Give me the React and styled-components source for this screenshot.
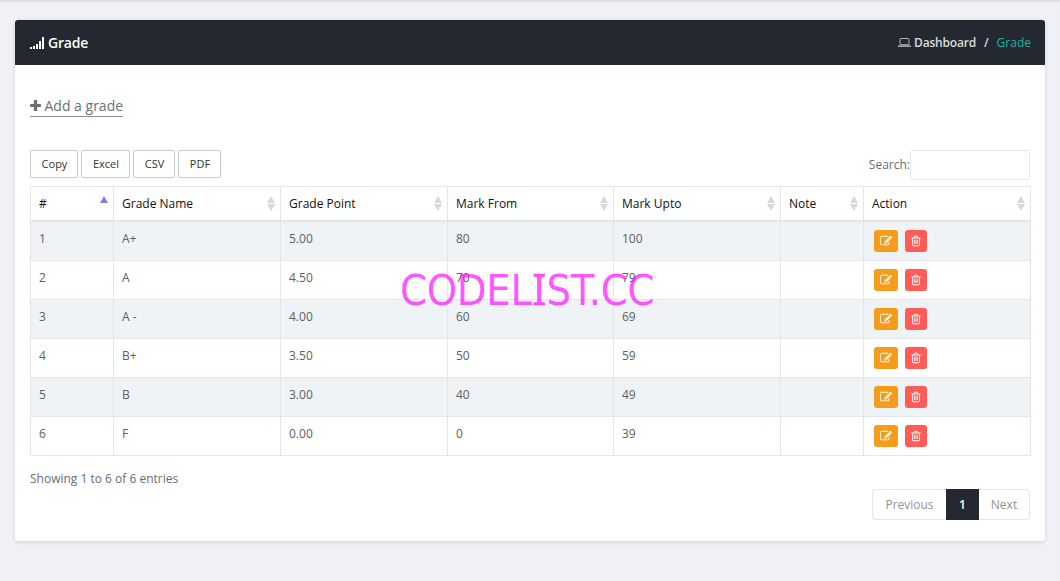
import React from "react";
import styled, { createGlobalStyle, css } from "styled-components";

const Global = createGlobalStyle`
  * { box-sizing: border-box; }
  body {
    margin: 0;
    background: #f0f1f6;
    color: #6a6e72;
    font: 13px/20px "Open Sans", sans-serif;
  }
  button, input { font-family: inherit; }
`;

const Page = styled.main`
  position: relative;
  height: 581px;
  padding: 20px 15px 0;
  overflow: hidden;
  box-shadow: inset 0 3px 3px -2px rgba(0, 0, 0, 0.13);
`;

const Card = styled.section`
  height: 521px;
  background: #fff;
  border-radius: 3px;
  box-shadow: 0 1px 4px rgba(0, 0, 0, 0.13);
`;

const CardHeader = styled.header`
  display: flex;
  align-items: center;
  justify-content: space-between;
  height: 45px;
  padding: 0 14px 0 15px;
  border-radius: 3px 3px 0 0;
  background: #242830;
`;

const Title = styled.h1`
  display: flex;
  align-items: center;
  gap: 4px;
  margin: 0;
  color: #fff;
  font-size: 14px;
  font-weight: 600;
  letter-spacing: -0.2px;
`;

const Breadcrumb = styled.nav`
  display: flex;
  align-items: center;
  color: #dcdcdc;
  font-size: 12px;
  font-weight: 600;
`;

const Separator = styled.span`
  margin: 0 8px;
`;

const Crumb = styled.span`
  display: flex;
  align-items: center;
  gap: 3px;
  letter-spacing: -0.2px;
  ${(p) => p.$current && css`color: #17b3a8; font-weight: 400; letter-spacing: 0;`}
`;

const CardBody = styled.div`
  padding: 31px 14px 0 15px;
`;

const AddLink = styled.a`
  display: inline-flex;
  align-items: center;
  gap: 3.5px;
  height: 21px;
  padding-bottom: 1px;
  border-bottom: 1px solid #8c8f92;
  color: #6c7074;
  font-size: 14px;
  line-height: 19px;
  vertical-align: top;
`;

const Toolbar = styled.div`
  display: flex;
  justify-content: space-between;
  height: 30px;
  margin: 33px 1px 6px 0;
`;

const ExportGroup = styled.div`
  display: flex;
  gap: 3px;
`;

const ExportButton = styled.button`
  width: ${(p) => p.$width}px;
  height: 28px;
  padding: 0 0 2px 1px;
  border: 1px solid #c9c9c9;
  border-radius: 2px;
  background: #fff;
  color: #333;
  font-size: 11px;
`;

const SearchLabel = styled.label`
  display: flex;
  align-items: center;
  font-size: 12px;
  line-height: 28px;
`;

const SearchInput = styled.input`
  width: 120px;
  height: 30px;
  border: 1px solid #e4e7ea;
  border-radius: 3px;
  background: #fff;
`;

const Table = styled.table`
  width: 1001px;
  table-layout: fixed;
  border-collapse: separate;
  border-spacing: 0;
  border: solid #e2e7eb;
  border-width: 1px 1px 0 0;
`;

const HeadCell = styled.th`
  height: 35px;
  padding: 0 5.5px 0 8px;
  border: solid #e2e7eb;
  border-width: 0 0 2px 1px;
  color: #111;
  font-size: 12px;
  font-weight: 400;
  text-align: left;
`;

const HeadContent = styled.div`
  display: flex;
  align-items: center;
  justify-content: space-between;
`;

const Row = styled.tr`
  background: #fff;
  &:nth-child(odd) { background: #eff3f6; }
`;

const Cell = styled.td`
  height: 39px;
  padding: 0 8px 4px;
  border: solid #e2e7eb;
  border-width: 0 0 1px 1px;
  font-size: 12px;
  color: #606060;
`;

const ActionCell = styled(Cell)`
  padding: 0 10px;
`;

const Actions = styled.div`
  display: flex;
  gap: 7px;
`;

const ActionButton = styled.button`
  display: flex;
  align-items: center;
  justify-content: center;
  width: ${(p) => (p.$danger ? 22 : 24)}px;
  height: 22px;
  padding: 0;
  border: 0;
  border-radius: 3px;
  background: ${(p) => (p.$danger ? "#ff5b57" : "#f59c1a")};
  color: #fff;
`;

const Info = styled.div`
  margin-top: 13px;
  font-size: 12px;
`;

const Pagination = styled.nav`
  display: flex;
  justify-content: flex-end;
  height: 31px;
  margin-right: 1px;
`;

const PageButton = styled.button`
  width: ${(p) => p.$width}px;
  padding: 0;
  border: 1px solid #e2e7eb;
  border-width: ${(p) => p.$border};
  border-radius: ${(p) => p.$radius};
  background: #fff;
  color: #939393;
  font-size: 12px;
  ${(p) => p.$active && css`background: #242830; color: #fff; font-weight: 600;`}
`;

const Watermark = styled.div`
  position: absolute;
  left: 400px;
  top: 260px;
  color: rgba(255, 0, 255, 0.68);
  font: 43px/60px "DejaVu Sans Condensed", "DejaVu Sans", sans-serif;
  font-stretch: condensed;
  letter-spacing: -0.3px;
  white-space: nowrap;
  pointer-events: none;
`;

const SerifedLetter = styled.span`
  font-family: "Noto Sans", sans-serif;
  font-size: 44px;
  line-height: 1;
  -webkit-text-stroke: 0.3px rgba(255, 0, 255, 0.68);
`;

const SignalIcon = () => (
  <svg width="14" height="12" fill="currentColor" shapeRendering="crispEdges">
    <path d="M0 10h2v2H0zM3 9h2v3H3zM6 7h2v5H6zM9 4h2v8H9zM12 0h2v12h-2z" />
  </svg>
);

const LaptopIcon = () => (
  <svg width="13" height="9" fill="none" stroke="currentColor">
    <rect x="2" y=".5" width="9" height="6.2" rx="1" opacity=".75" />
    <path d="M0 8.1h13" strokeWidth="1.4" opacity=".85" />
  </svg>
);

const PlusIcon = () => (
  <svg width="11" height="11" fill="currentColor">
    <path d="M4.6 0h1.8q.8 0 .8.8V4h3q.8 0 .8.8v1.4q0 .8-.8.8h-3v3.200q0 .8-.8.8H4.600q-.8 0-.8-.8V7h-3Q0 7 0 6.200V4.800Q0 4 .8 4h3V.8q0-.8.8-.8z" />
  </svg>
);

const EditIcon = () => (
  <svg width="12" height="12" viewBox="0 0 1792 1792" fill="currentColor">
    <path d="M888 1184l116-116-152-152-116 116v56h96v96h56zm440-720q-16-16-33 1l-350 350q-17 17-1 33t33-1l350-350q17-17 1-33zm80 594v190q0 119-84.500 203.500t-203.500 84.500h-832q-119 0-203.500-84.500t-84.500-203.500v-832q0-119 84.500-203.500t203.500-84.500h832q63 0 117 25 15 7 18 23 3 17-9 29l-49 49q-14 14-32 8-23-6-45-6h-832q-66 0-113 47t-47 113v832q0 66 47 113t113 47h832q66 0 113-47t47-113v-126q0-13 9-22l64-64q15-15 35-7t20 29zm-96-738l288 288-672 672h-288v-288zm444 132l-92 92-288-288 92-92q28-28 68-28t68 28l152 152q28 28 28 68t-28 68z" />
  </svg>
);

const TrashIcon = () => (
  <svg width="12" height="12" viewBox="0 0 1792 1792" fill="currentColor">
    <path d="M704 736v576q0 14-9 23t-23 9h-64q-14 0-23-9t-9-23v-576q0-14 9-23t23-9h64q14 0 23 9t9 23zm256 0v576q0 14-9 23t-23 9h-64q-14 0-23-9t-9-23v-576q0-14 9-23t23-9h64q14 0 23 9t9 23zm256 0v576q0 14-9 23t-23 9h-64q-14 0-23-9t-9-23v-576q0-14 9-23t23-9h64q14 0 23 9t9 23zm128 724v-948h-896v948q0 22 7 40.500t14.500 27 10.500 8.500h832q3 0 10.500-8.500t14.500-27 7-40.500zm-672-1076h448l-48-117q-7-9-17-11h-317q-10 2-17 11zm928 32v64q0 14-9 23t-23 9h-96v948q0 83-47 143.500t-113 60.500h-832q-66 0-113-58.500t-47-141.500v-952h-96q-14 0-23-9t-9-23v-64q0-14 9-23t23-9h309l70-167q15-37 54-63t79-26h320q40 0 79 26t54 63l70 167h309q14 0 23 9t9 23z" />
  </svg>
);

const SortIcon = ({ ascending }) => (
  <svg width="8" height="15" fill={ascending ? "#7b7fe0" : "#d8d8d8"}>
    <path d="M4 0l4 7H0z" />
    {!ascending && <path d="M0 8h8l-4 7z" />}
  </svg>
);

const columns = [
  ["#", 83],
  ["Grade Name", 167],
  ["Grade Point", 167],
  ["Mark From", 166],
  ["Mark Upto", 167],
  ["Note", 83],
  ["Action", 167],
];

const grades = [
  ["1", "A+", "5.00", "80", "100", ""],
  ["2", "A", "4.50", "70", "79", ""],
  ["3", "A -", "4.00", "60", "69", ""],
  ["4", "B+", "3.50", "50", "59", ""],
  ["5", "B", "3.00", "40", "49", ""],
  ["6", "F", "0.00", "0", "39", ""],
];

const exportsList = [["Copy", 48], ["Excel", 49], ["CSV", 42], ["PDF", 43]];

export default function App() {
  return (
    <>
      <Global />
      <Page>
        <Card>
          <CardHeader>
            <Title><SignalIcon />Grade</Title>
            <Breadcrumb>
              <Crumb><LaptopIcon />Dashboard</Crumb>
              <Separator>/</Separator>
              <Crumb $current>Grade</Crumb>
            </Breadcrumb>
          </CardHeader>
          <CardBody>
            <AddLink><PlusIcon />Add a grade</AddLink>
            <Toolbar>
              <ExportGroup>
                {exportsList.map(([label, width]) => (
                  <ExportButton key={label} $width={width}>{label}</ExportButton>
                ))}
              </ExportGroup>
              <SearchLabel>Search:<SearchInput /></SearchLabel>
            </Toolbar>
            <Table>
              <colgroup>
                {columns.map(([label, width]) => <col key={label} width={width} />)}
              </colgroup>
              <thead>
                <tr>
                  {columns.map(([label], i) => (
                    <HeadCell key={label}>
                      <HeadContent>{label}<SortIcon ascending={i === 0} /></HeadContent>
                    </HeadCell>
                  ))}
                </tr>
              </thead>
              <tbody>
                {grades.map((grade) => (
                  <Row key={grade[0]}>
                    {grade.map((value, i) => <Cell key={i}>{value}</Cell>)}
                    <ActionCell>
                      <Actions>
                        <ActionButton aria-label="Edit"><EditIcon /></ActionButton>
                        <ActionButton $danger aria-label="Delete"><TrashIcon /></ActionButton>
                      </Actions>
                    </ActionCell>
                  </Row>
                ))}
              </tbody>
            </Table>
            <Info>Showing 1 to 6 of 6 entries</Info>
            <Pagination>
              <PageButton $width={74} $border="1px 0 1px 1px" $radius="4px 0 0 4px">Previous</PageButton>
              <PageButton $width={33} $border="0" $radius="0" $active>1</PageButton>
              <PageButton $width={51} $border="1px 1px 1px 0" $radius="0 4px 4px 0">Next</PageButton>
            </Pagination>
          </CardBody>
        </Card>
        <Watermark>CODEL<SerifedLetter>I</SerifedLetter>ST.CC</Watermark>
      </Page>
    </>
  );
}
